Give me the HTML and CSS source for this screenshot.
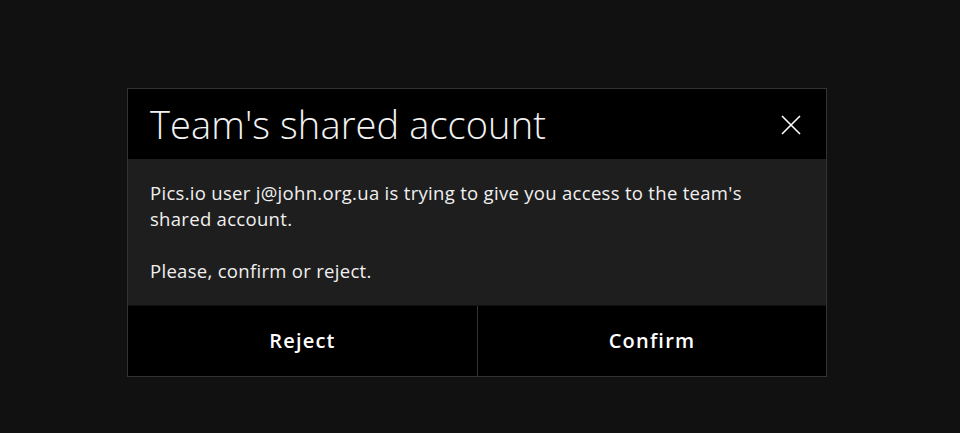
FILE: index.html
```html
<!doctype html>
<html>
<head>
<meta charset="utf-8">
<title>Team's shared account</title>
<link rel="stylesheet" href="styles.css">
</head>
<body>
<div class="wrap">
	<div class="dialog">
		<div class="dialog_head">
			<h2 class="dialog_title">Team's shared account</h2>
			<span class="dialog_close">
				<svg width="20" height="20" viewBox="0 0 20 20"><path d="M1 1L19 19M19 1L1 19" stroke="#fff" stroke-width="1.6" fill="none"/></svg>
			</span>
		</div>
		<div class="dialog_body">
			Pics.io user j@john.org.ua is trying to give you access to the team's shared account.<br><br>
			Please, confirm or reject.
		</div>
		<div class="dialog_btns">
			<span class="btn">Reject</span>
			<span class="btn">Confirm</span>
		</div>
	</div>
</div>
</body>
</html>
```

FILE: styles.css
```css
*{ margin:0; padding:0; box-sizing:border-box;}
body{ background:#111; color:#fff; font-family:"Open Sans","Noto Sans",sans-serif;}

.wrap{ height:433px; display:flex; align-items:flex-start; justify-content:center; padding-top:88px; padding-right:6px;}
.dialog{ width:700px; border:1px solid #333; background:#000;}

.dialog_head{ height:70px; display:flex; align-items:center; justify-content:space-between; padding:0 25px 0 22px;}
.dialog_title{ font-weight:300; font-size:38px; letter-spacing:0.1px; color:#f2f2f2;}
.dialog_close{ display:flex; width:20px; height:20px; margin-top:1px;}

.dialog_body{ background:#1e1e1e; padding:21px 70px 21px 22px; font-size:18.5px; line-height:26px; color:#f0f0f0; letter-spacing:0.3px;}

.dialog_btns{ display:flex; border-top:1px solid #111; height:71px;}
.btn{ display:flex; align-items:center; justify-content:center; font-size:20px; font-weight:600; letter-spacing:1.2px; padding-bottom:1px;}
.btn:first-child{ width:350px; border-right:1px solid #333;}
.btn:last-child{ flex:1;}
```
